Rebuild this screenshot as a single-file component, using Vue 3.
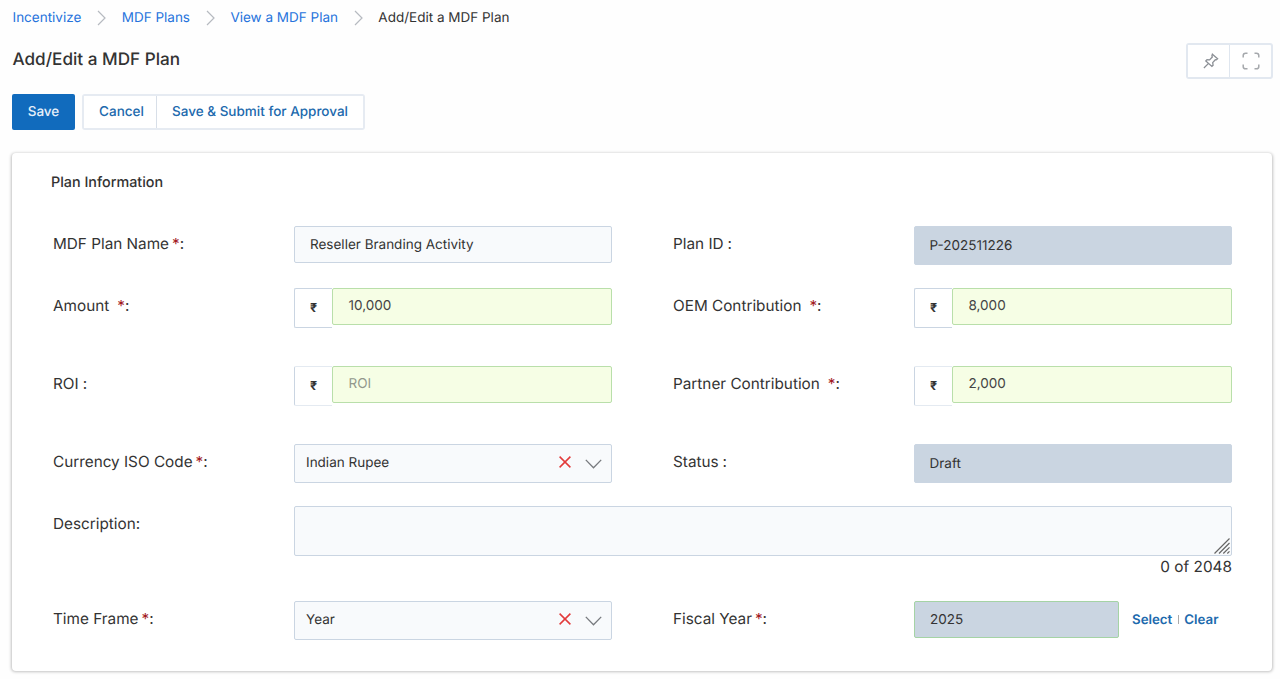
<script setup>
const crumbs = ['Incentivize', 'MDF Plans', 'View a MDF Plan']

const rows = [
  {
    height: 'r62',
    cells: [
      { label: 'MDF Plan Name', required: true, type: 'text', value: 'Reseller Branding Activity' },
      { label: 'Plan ID', spaced: true, type: 'readonly', value: 'P-202511226' },
    ],
  },
  {
    height: 'r78',
    cells: [
      { label: 'Amount', required: true, wide: true, type: 'money', value: '10,000' },
      { label: 'OEM Contribution', required: true, wide: true, type: 'money', value: '8,000' },
    ],
  },
  {
    height: 'r78',
    light: true,
    cells: [
      { label: 'ROI', spaced: true, type: 'money', placeholder: 'ROI' },
      { label: 'Partner Contribution', required: true, wide: true, type: 'money', value: '2,000' },
    ],
  },
  {
    height: 'r62',
    cells: [
      { label: 'Currency ISO Code', required: true, type: 'select', value: 'Indian Rupee' },
      { label: 'Status', spaced: true, type: 'readonly', value: 'Draft' },
    ],
  },
  {
    height: 'r95',
    cells: [{ label: 'Description', type: 'area' }],
  },
  {
    height: 'r62',
    cells: [
      { label: 'Time Frame', required: true, type: 'select', value: 'Year' },
      { label: 'Fiscal Year', required: true, type: 'picker', value: '2025' },
    ],
  },
]
</script>

<template>
  <div class="page">
    <nav class="crumbs">
      <template v-for="c in crumbs" :key="c">
        <a class="crumb">{{ c }}</a>
        <svg class="sep" width="9" height="16" viewBox="0 0 9 16"><path d="M1 1l7 7-7 7" /></svg>
      </template>
      <span class="current">Add/Edit a MDF Plan</span>
    </nav>

    <header class="head">
      <h1>Add/Edit a MDF Plan</h1>
      <div class="tools">
        <button class="tool pin">
          <svg width="16" height="16" viewBox="0 0 16 16">
            <path d="M9.4 1.2l5.2 4.6-1.3 1.1-1-.2-2.6 2.9.4 2.6-1.2 1.2-6.1-5.5 1.2-1.2 2.6.2 2.7-2.9-.4-1.2zM5.3 10.6L.9 15" />
          </svg>
        </button>
        <button class="tool full">
          <svg width="18" height="18" viewBox="0 0 18 18">
            <path d="M1.2 5.500V3.600q0-2.400 2.400-2.400H5.500M12.500 1.200h1.900q2.400 0 2.400 2.400V5.500M16.800 12.500v1.900q0 2.400-2.400 2.400H12.500M5.500 16.800H3.600q-2.400 0-2.400-2.400V12.500" />
          </svg>
        </button>
      </div>
    </header>

    <div class="actions">
      <button class="save">Save</button>
      <div class="group">
        <button class="cancel">Cancel</button>
        <button class="submit">Save &amp; Submit for Approval</button>
      </div>
    </div>

    <section class="card">
      <h2>Plan Information</h2>
      <div v-for="(row, i) in rows" :key="i" class="row" :class="[row.height, { light: row.light }]">
        <template v-for="cell in row.cells" :key="cell.label">
          <div class="label">{{ cell.label }}<span v-if="cell.required" class="star" :class="{ wide: cell.wide }">*</span><span :class="{ gap: cell.spaced }">:</span></div>

          <div v-if="cell.type === 'text'" class="box input">{{ cell.value }}</div>

          <div v-else-if="cell.type === 'readonly'" class="box readonly">{{ cell.value }}</div>

          <div v-else-if="cell.type === 'money'" class="money">
            <span class="rupee">₹</span>
            <div class="box amount" :class="{ empty: !cell.value }">{{ cell.value || cell.placeholder }}</div>
          </div>

          <div v-else-if="cell.type === 'select'" class="box select">
            <span class="picked">{{ cell.value }}</span>
            <svg class="clear" width="12" height="12" viewBox="0 0 12 12"><path d="M.6.6l10.800 10.800M11.400.6L.6 11.400" /></svg>
            <svg class="caret" width="17" height="10" viewBox="0 0 17 10"><path d="M.8.9l7.700 7.800L16.200.9" /></svg>
          </div>

          <div v-else-if="cell.type === 'area'" class="area">
            <div class="box textarea">
              <svg width="16" height="16" viewBox="0 0 16 16">
                <path d="M.5 15.500l15-15M5 15.500L15.500 5M9.300 15.500l6.200-6.200M13.300 15.500l2.200-2.200" />
              </svg>
            </div>
            <div class="count">0 of 2048</div>
          </div>

          <div v-else class="picker">
            <div class="box year">{{ cell.value }}</div>
            <a>Select</a><i></i><a>Clear</a>
          </div>
        </template>
      </div>
    </section>
  </div>
</template>

<style>
body {
  margin: 0;
  background: #fefefe;
}
</style>

<style scoped>
.page {
  box-sizing: border-box;
  width: 1280px;
  height: 679px;
  overflow: hidden;
  padding: 0 7.500px 0 12px;
  font-family: Inter, "Liberation Sans", sans-serif;
  font-size: 13.5px;
  color: #333;
  text-rendering: geometricPrecision;
}
svg {
  fill: none;
  display: block;
}
button {
  font: inherit;
  text-rendering: inherit;
  margin: 0;
  padding: 0;
  background: #fff;
  box-sizing: border-box;
}
.crumbs {
  display: flex;
  align-items: center;
  height: 35px;
  padding-left: 0.500px;
  font-size: 13.500px;
}
.crumb {
  color: #2673dc;
}
.sep {
  margin: 0 15.700px;
  stroke: #b6bac0;
  stroke-width: 1.2;
}
.head {
  display: flex;
  justify-content: space-between;
  height: 59px;
}
h1 {
  margin: 14px 0 0 0.500px;
  font-size: 17.150px;
  line-height: 22px;
  font-weight: 500;
}
.tools {
  display: flex;
  box-sizing: border-box;
  width: 87px;
  height: 36px;
  margin: 8px 0 0;
  border: 2px solid #e2e8f0;
  border-radius: 3px;
}
.tool {
  border: 0;
  display: flex;
  align-items: center;
}
.pin {
  width: 42px;
  padding-left: 15px;
  border-right: 1px solid #dfe6ef;
}
.pin svg {
  stroke: #8b8f95;
  stroke-width: 1.3;
}
.full {
  padding-left: 12px;
}
.full svg {
  stroke: #a5a8ac;
  stroke-width: 1.500;
}
.actions {
  display: flex;
  height: 36px;
  gap: 7px;
}
.actions button {
  font-weight: 500;
  color: #2069ad;
}
.actions .save {
  width: 63px;
  border: 0;
  border-radius: 2px;
  background: #116bbd;
  color: #e6f0fa;
}
.group {
  display: flex;
  box-sizing: border-box;
  width: 283px;
  border: 2px solid #e6ebf2;
  border-radius: 3px;
}
.group button {
  border: 0;
}
.cancel {
  width: 73px;
  padding-left: 3px;
}
.group .cancel {
  border-right: 1px solid #d8dfe8;
}
.submit {
  flex: 1;
}
.card {
  box-sizing: border-box;
  width: 1260px;
  height: 518px;
  margin-top: 23px;
  padding: 20px 0 0 41px;
  border-radius: 4px;
  background: #fff;
  box-shadow: 0 0.500px 3px 0.500px rgba(0, 0, 0, 0.24);
}
h2 {
  margin: 0 0 33px -2px;
  font-size: 14.350px;
  line-height: 20px;
  font-weight: 500;
}
.row {
  display: grid;
  grid-template-columns: 241px 318px 302px 318px;
  align-items: start;
}
.row > :nth-child(3) {
  margin-left: 61px;
}
.r62 {
  height: 61.500px;
}
.r78 {
  height: 78.300px;
}
.r95 {
  height: 95.500px;
}
.label {
  font-size: 15.300px;
  line-height: 20px;
  padding-top: 8px;
  white-space: nowrap;
}
.star {
  color: #a3191f;
  margin-left: 3px;
}
.star.wide {
  margin-left: 8px;
}
.gap {
  margin-left: 4px;
}
.box {
  box-sizing: border-box;
  border: 1.500px solid #cad5e2;
  border-radius: 2px;
  background: #f8fafc;
  display: flex;
  align-items: center;
}
.input {
  height: 37px;
  padding: 0 0 0 15px;
}
.readonly {
  height: 39px;
  padding: 0 0 0 14.500px;
  background: #cad5e1;
}
.money {
  display: flex;
}
.rupee {
  box-sizing: border-box;
  width: 38px;
  height: 40px;
  padding-left: 15px;
  line-height: 39px;
  border: 1px solid #cad5e2;
  border-right: 0;
  border-radius: 2px 0 0 2px;
  font-weight: 700;
  font-size: 12.500px;
  background: #fff;
}
.light .rupee {
  border-top-color: #e4eaf1;
  border-bottom-color: #e4eaf1;
}
.amount {
  flex: 1;
  height: 37px;
  padding: 0 0 0 15.500px;
  background: #f6fee5;
  border-color: #b9dfaa;
  color: #444;
}
.empty {
  color: #92988c;
}
.select {
  height: 39px;
  padding: 0 9px 0 11px;
}
.picked {
  flex: 1;
  margin-top: -2px;
}
.clear {
  stroke: #e23a3a;
  stroke-width: 1.500;
  margin: -3px 14.500px 0 0;
}
.caret {
  stroke: #777a7e;
  stroke-width: 1.300;
}
.area {
  grid-column: 2 / 5;
}
.textarea {
  height: 50px;
  align-items: flex-end;
  justify-content: flex-end;
  padding: 0 1px 1px 0;
}
.textarea svg {
  stroke: #666;
  stroke-width: 1.200;
}
.count {
  text-align: right;
  font-size: 15.350px;
  line-height: 22px;
}
.picker {
  display: flex;
  align-items: center;
}
.year {
  width: 205px;
  height: 37px;
  padding-left: 15px;
  margin-right: 13px;
  background: #cad5e1;
  border-color: #a5d3a5;
}
.picker a {
  color: #2069ad;
  font-weight: 600;
  font-size: 13.300px;
}
.picker i {
  width: 1px;
  height: 9px;
  margin: 0 5px 0 6px;
  background: #aaa;
}
</style>
